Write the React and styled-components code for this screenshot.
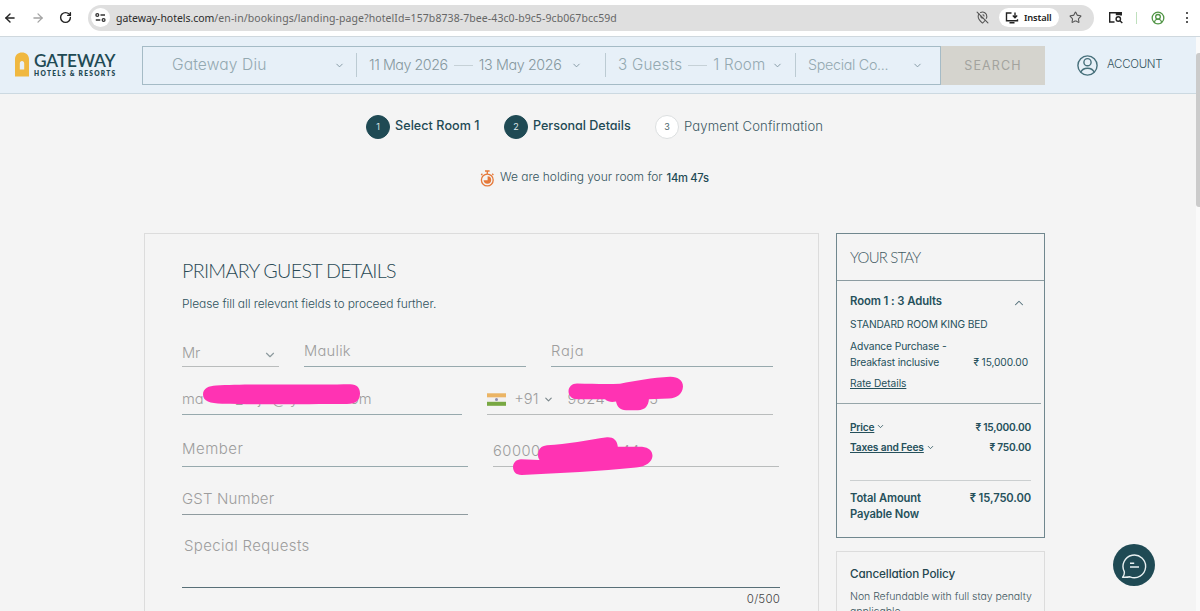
import React from 'react';
import styled, { createGlobalStyle, css } from 'styled-components';
import {
  ArrowLeft, ArrowRight, ChevronDown, ChevronUp, CircleUserRound, MapPinOff, RotateCw, Star,
} from 'lucide-react';

// === STYLES === //

const GlobalStyle = createGlobalStyle`
  * {
    box-sizing: border-box;
  }

  body {
    margin: 0;
    overflow: hidden;
    background: #f4f4f4;
    color: #1f4a54;
    font-family: Inter, "Noto Sans", sans-serif;
  }
`;

// size, weight and tracking differ for nearly every label
const type = css`
  font-size: ${(props) => props.$size || 12}px;
  font-weight: ${(props) => props.$weight || 300};
  letter-spacing: ${(props) => props.$track || 0}px;
  white-space: nowrap;
`;

const Window = styled.div`
  display: flex;
  flex-direction: column;
  height: 611px;
  overflow: hidden;
`;

// browser bar

const BrowserBar = styled.div`
  flex: none;
  display: flex;
  align-items: center;
  height: 37px;
  padding: 0 8px 1px 3px;
  background: #fff;
  border-bottom: 1px solid #cfd8de;
`;

const NavButtons = styled.div`
  display: flex;
  align-items: center;
  gap: 14px;
  width: 85px;
`;

const AddressBar = styled.div`
  display: flex;
  align-items: center;
  width: 1006px;
  height: 26px;
  padding: 0 12px 0 3px;
  border-radius: 13px;
  background: #dfdfdf;
`;

const SiteInfo = styled.div`
  display: flex;
  align-items: center;
  justify-content: center;
  width: 19px;
  height: 19px;
  margin-right: 6px;
  border-radius: 50%;
  background: #fff;
`;

const Url = styled.div`
  flex: 1;
  font-family: "Noto Sans", sans-serif;
  font-size: 10.5px;
  letter-spacing: 0.08px;
  white-space: nowrap;
  color: #666;
`;

const UrlHost = styled.span`
  color: #2c2c2c;
  letter-spacing: -0.04px;
`;

const InstallButton = styled.div`
  display: flex;
  align-items: center;
  gap: 5px;
  width: 60px;
  height: 19px;
  margin: 0 10px 0 10px;
  padding-left: 6px;
  border-radius: 10px;
  background: #fff;
  font-family: "Noto Sans", sans-serif;
  font-size: 9.3px;
  font-weight: 600;
  letter-spacing: -0.15px;
  color: #222;
`;

const BrowserActions = styled.div`
  flex: 1;
  display: flex;
  align-items: center;
  margin-left: 14px;
`;

const ActionDivider = styled.div`
  width: 1px;
  height: 12px;
  margin: 0 14px 0 13px;
  background: #bfe0bd;
`;

const MenuDots = styled.div`
  display: grid;
  gap: 2.5px;
  margin-left: 21px;

  span {
    width: 2px;
    height: 2px;
    border-radius: 50%;
    background: #222;
  }
`;

// viewport under the browser bar

const Viewport = styled.div`
  flex: 1;
  display: flex;
  min-height: 0;
`;

const Page = styled.div`
  width: 1196px;
  overflow: hidden;
  font-feature-settings: "cv11";
`;

const Scrollbar = styled.div`
  width: 4px;
  padding-top: 16px;
  background: #fafafa;
`;

const ScrollThumb = styled.div`
  height: 154px;
  border-radius: 3px 0 0 3px;
  background: #cbcbcb;
`;

// site header

const Header = styled.header`
  display: flex;
  height: 57px;
  padding: 9px 0 0 15px;
  background: #e7f0f8;
  border-bottom: 1px solid #ccd9e1;
`;

const Brand = styled.div`
  display: flex;
  gap: 5px;
  width: 127px;
  padding-top: 6px;
`;

const BrandText = styled.div`
  color: #1f4a54;
`;

const BrandName = styled.div`
  height: 16px;
  font-family: Lato, sans-serif;
  font-size: 17.3px;
  line-height: 17px;
  font-weight: 600;
  letter-spacing: -0.1px;
`;

const BrandTag = styled.div`
  margin-top: 1px;
  font-family: Lato, sans-serif;
  font-size: 6.6px;
  line-height: 8px;
  font-weight: 800;
  letter-spacing: 1.27px;
  white-space: nowrap;
`;

const SearchBox = styled.div`
  display: flex;
  align-items: center;
  width: 799px;
  height: 39px;
  padding-bottom: 1px;
  border: 1px solid #a5bbc6;
`;

const SearchField = styled.div`
  display: flex;
  align-items: center;
  width: ${(props) => props.$width}px;
  height: 24px;
  padding: 0 ${(props) => props.$right}px 0 ${(props) => props.$left}px;
  border-left: ${(props) => (props.$first ? 'none' : '1px solid #bccbd3')};
  color: ${(props) => props.$color || '#94a9b1'};

  svg {
    margin-left: auto;
  }
`;

const SearchText = styled.span`
  ${type}
  padding-bottom: 2px;
`;

const Dash = styled.span`
  width: 19px;
  height: 1px;
  margin: 0 6px;
  background: #c6d1d7;
`;

const SearchButton = styled.button`
  width: 104px;
  height: 39px;
  padding: 0;
  border: none;
  background: #d5d4ce;
  color: #a3a39e;
  font: 400 12.5px Inter, sans-serif;
  letter-spacing: 1.15px;
`;

const Account = styled.div`
  display: flex;
  align-items: center;
  gap: 9px;
  height: 39px;
  margin-left: 32px;
  color: #47707b;
`;

const AccountText = styled.span`
  ${type}
  padding-bottom: 3px;
  color: #33535e;
`;

// booking steps

const Steps = styled.div`
  display: flex;
  align-items: center;
  height: 25px;
  margin: 20px 0 0 366px;
`;

const Step = styled.div`
  display: flex;
  align-items: center;
  gap: 5px;
  width: ${(props) => props.$width}px;
`;

const StepNumber = styled.div`
  display: flex;
  align-items: center;
  justify-content: center;
  width: 24px;
  height: 24px;
  border: 1px solid ${(props) => (props.$done ? '#1f4a54' : '#dcdfe0')};
  border-radius: 50%;
  background: ${(props) => (props.$done ? '#1f4a54' : '#fff')};
  color: ${(props) => (props.$done ? '#dfe8ea' : '#4d666e')};
  font-size: 9px;
`;

const StepLabel = styled.div`
  ${type}
  padding-bottom: 2px;
  color: ${(props) => (props.$weight === 500 ? '#1f4a54' : '#3d5a64')};
`;

const HoldNotice = styled.div`
  display: flex;
  align-items: center;
  height: 18px;
  margin: 30px 0 0 480px;
`;

const HoldText = styled.span`
  ${type}
  padding-bottom: 3px;
  margin-left: 5px;
  color: ${(props) => (props.$weight === 500 ? '#1f4a54' : '#35545e')};
`;

const TimeLeft = styled(HoldText)`
  margin-left: 4px;
  padding-bottom: 1px;
`;

const Columns = styled.main`
  display: flex;
  align-items: flex-start;
  gap: 17px;
  margin: 46px 0 0 144px;
`;

// guest form

const GuestCard = styled.section`
  position: relative;
  width: 675px;
  height: 420px;
  padding: 24px 0 0 37px;
  border: 1px solid #dcdcdc;
`;

const CardTitle = styled.h2`
  ${type}
  height: 26px;
  margin: 0;
  font-family: Lato, sans-serif;
  line-height: 26px;
  color: #2a4a55;
`;

const CardHint = styled.p`
  ${type}
  height: 20px;
  margin: 10px 0 0;
  line-height: 20px;
  color: #2f525d;
`;

const FieldRow = styled.div`
  display: flex;
  align-items: flex-end;
  gap: ${(props) => props.$gap || 25}px;
  height: ${(props) => props.$height}px;
`;

const Field = styled.div`
  display: flex;
  align-items: center;
  width: ${(props) => props.$width}px;
  height: 30px;
  padding-top: ${(props) => props.$drop || 0}px;
  padding-bottom: ${(props) => props.$lift || 0}px;
  border-bottom: 1px solid ${(props) => props.$line || '#97a9ad'};
  color: #9d9d9d;

  svg {
    flex: none;
  }
`;

const FieldText = styled.span`
  ${type}
  font-size: ${(props) => props.$size || 14.7}px;
  width: ${(props) => (props.$width ? `${props.$width}px` : 'auto')};
`;

const SelectArrow = styled(ChevronDown)`
  margin: 3px 2px 0 auto;
`;

const Requests = styled.div`
  width: 598px;
  height: 73px;
  padding: 20px 0 0 2px;
  border-bottom: 1px solid #586f77;
  color: #9d9d9d;
`;

const Counter = styled.div`
  ${type}
  width: 598px;
  margin-top: 4px;
  text-align: right;
  color: #444;
`;

const Scribbles = styled.svg`
  position: absolute;
  left: 37px;
  top: 136px;
`;

// stay summary

const Sidebar = styled.aside`
  width: 209px;
  font-feature-settings: normal;
`;

const StayCard = styled.section`
  height: 305px;
  border: 1px solid #70878e;
`;

const StayTitle = styled.h3`
  ${type}
  height: 47px;
  margin: 0;
  padding-left: 13px;
  border-bottom: 1px solid #8c9ca1;
  font-family: Lato, sans-serif;
  line-height: 46px;
  color: #3f5963;
`;

const RoomBlock = styled.div`
  width: 204px;
  height: 123px;
  padding: 11px 13px 0;
  border-bottom: 1px solid #96a5a9;
`;

const CollapseArrow = styled(ChevronUp)`
  margin: 4px 2px 0 0;
`;

const Split = styled.div`
  display: flex;
  align-items: ${(props) => props.$align || 'center'};
  justify-content: space-between;
  height: ${(props) => props.$height}px;
`;

const StayText = styled.div`
  ${type}
  line-height: 16px;
  color: #25505b;
`;

const StayLink = styled.span`
  ${type}
  text-decoration: underline;
  text-underline-offset: 1px;
  line-height: 16px;
  color: #25505b;
`;

const LinkGroup = styled.div`
  display: flex;
  align-items: center;
  gap: 2px;
`;

const PriceBlock = styled.div`
  height: 77px;
  margin: 0 13px;
  padding-top: 12px;
  border-bottom: 1px solid #cbcfd0;
`;

const TotalBlock = styled.div`
  display: flex;
  justify-content: space-between;
  margin: 0 13px;
  padding-top: 9px;
`;

const PolicyCard = styled.section`
  height: 100px;
  margin-top: 13px;
  padding: 13px 0 0 13px;
  border: 1px solid #dcdcdc;
  font-feature-settings: "cv11";
`;

const PolicyTitle = styled.div`
  ${type}
  line-height: 18px;
  color: #25464f;
`;

const PolicyText = styled.div`
  ${type}
  margin-top: 6px;
  line-height: 15px;
  color: #3e5760;
`;

const ChatButton = styled.button`
  position: fixed;
  left: 1113px;
  top: 544px;
  display: flex;
  align-items: center;
  justify-content: center;
  width: 42px;
  height: 42px;
  padding: 0;
  border: none;
  border-radius: 50%;
  background: #1f4a54;
`;

// ===  ICONS === //

const TuneIcon = () => (
  <svg width="11" height="11" viewBox="0 0 11 11" fill="none" stroke="#333" strokeWidth="1.3">
    <circle cx="2.3" cy="3" r="1.4" />
    <path d="M5.5 3H10M0.8 8H5.3" />
    <circle cx="8.6" cy="8" r="1.4" />
  </svg>
);

const InstallIcon = () => (
  <svg width="14" height="12" viewBox="0 0 14 12" fill="none" stroke="#222" strokeWidth="1.4">
    <path d="M6.5 1H1.5V8.8H12.5V7.2M4.5 10.8H9.5M10 0.5V5.5M7.8 3.6L10 5.8L12.2 3.6" />
  </svg>
);

const SearchPanelIcon = () => (
  <svg width="15" height="13" viewBox="0 0 15 13" fill="none" stroke="#222" strokeWidth="1.4">
    <path d="M6.5 11H1.7V1.7H13V4.5" />
    <path d="M8.5 1.7H13.2V3.5H8.5Z" fill="#222" />
    <circle cx="10.3" cy="8" r="2.2" />
    <path d="M12 9.7L14.3 12" />
  </svg>
);

const DoorLogo = () => (
  <svg width="14" height="25" viewBox="0 0 14 25">
    <path
      d="M0 24.5V7C0 3.2 3 0.5 7 0.5S14 3.2 14 7V24.5ZM4.8 17.5H9.2V11.5C9.2 10 8.3 9 7 9S4.8 10 4.8 11.5Z"
      fill="#f0b840"
      fillRule="evenodd"
    />
  </svg>
);

const AccountIcon = () => (
  <svg width="21" height="21" viewBox="0 0 21 21" fill="none" stroke="currentColor" strokeWidth="1.4">
    <circle cx="10.5" cy="10.5" r="9.6" />
    <circle cx="10.5" cy="7.2" r="3.6" />
    <path d="M3.8 17.2C5 14.4 7.5 13.2 10.5 13.2S16 14.4 17.2 17.2" />
  </svg>
);

const TimerIcon = () => (
  <svg width="15" height="17" viewBox="0 0 15 17" fill="none" stroke="#e5793a" strokeWidth="1.3">
    <circle cx="7.3" cy="10" r="5.9" />
    <path d="M5 1H9.6M7.3 1V4M12.2 3.8L13.4 5M2.4 3.8L1.2 5" />
    <path d="M7.6 6.2A3.8 3.8 0 1 1 3.6 10.3H7.6Z" fill="#e5793a" stroke="none" />
  </svg>
);

const IndiaFlag = () => (
  <svg width="19" height="13" viewBox="0 0 19 13">
    <rect width="19" height="13" fill="#f2f0ef" />
    <rect width="19" height="4" y="0.3" fill="#ebb464" />
    <rect width="19" height="4" y="8.8" fill="#78a843" />
    <circle cx="9.5" cy="6.5" r="1.5" fill="#8f8fae" />
  </svg>
);

const ChatIcon = () => (
  <svg width="26" height="27" viewBox="0 0 26 27" fill="none" stroke="#e9f1f2" strokeWidth="1.4">
    <path d="M3.3 19.6A11.3 11.3 0 1 1 9 24.8C6.8 25.3 4.6 25.4 1.6 25.2C3 23.6 3.6 21.8 3.3 19.6Z" strokeLinejoin="round" />
    <path d="M9 11.2H13.2M9 15H18" strokeWidth="1.6" />
  </svg>
);

// ===  COMPONENT DEFINITION ===  //

const Browser = () => (
  <BrowserBar>
    <NavButtons>
      <ArrowLeft size={14} color="#222" strokeWidth={2.4} />
      <ArrowRight size={14} color="#a3a3a3" strokeWidth={2.2} />
      <RotateCw size={13} color="#222" strokeWidth={2.6} />
    </NavButtons>
    <AddressBar>
      <SiteInfo><TuneIcon /></SiteInfo>
      <Url>
        <UrlHost>gateway-hotels.com</UrlHost>
        /en-in/bookings/landing-page?hotelId=157b8738-7bee-43c0-b9c5-9cb067bcc59d
      </Url>
      <MapPinOff size={13} color="#555" strokeWidth={2} />
      <InstallButton>
        <InstallIcon />
        Install
      </InstallButton>
      <Star size={13} color="#555" strokeWidth={2} />
    </AddressBar>
    <BrowserActions>
      <SearchPanelIcon />
      <ActionDivider />
      <CircleUserRound size={14} color="#4f9444" strokeWidth={2.2} />
      <MenuDots>
        <span />
        <span />
        <span />
      </MenuDots>
    </BrowserActions>
  </BrowserBar>
);

const SiteHeader = () => (
  <Header>
    <Brand>
      <DoorLogo />
      <BrandText>
        <BrandName>GATEWAY</BrandName>
        <BrandTag>HOTELS &amp; RESORTS</BrandTag>
      </BrandText>
    </Brand>
    <SearchBox>
      <SearchField $first $width={213} $left={29} $right={11}>
        <SearchText $size={15.6} $track={0.12}>Gateway Diu</SearchText>
        <ChevronDown size={11} color="#8095a0" />
      </SearchField>
      <SearchField $width={249} $left={12} $right={23} $color="#86989f">
        <SearchText $size={14.3} $track={-0.46}>11 May 2026</SearchText>
        <Dash />
        <SearchText $size={14.3} $track={-0.36}>13 May 2026</SearchText>
        <ChevronDown size={11} color="#8095a0" />
      </SearchField>
      <SearchField $width={190} $left={12} $right={12}>
        <SearchText $size={15.2} $track={0.22}>3 Guests</SearchText>
        <Dash />
        <SearchText $size={15.2} $track={0.2}>1 Room</SearchText>
        <ChevronDown size={11} color="#8095a0" />
      </SearchField>
      <SearchField $width={145} $left={12} $right={17}>
        <SearchText $size={14.3} $track={-0.3}>Special Co...</SearchText>
        <ChevronDown size={11} color="#8095a0" />
      </SearchField>
    </SearchBox>
    <SearchButton>SEARCH</SearchButton>
    <Account>
      <AccountIcon />
      <AccountText $size={11.5} $track={-0.3}>ACCOUNT</AccountText>
    </Account>
  </Header>
);

const BookingSteps = () => (
  <Steps>
    <Step $width={138}>
      <StepNumber $done>1</StepNumber>
      <StepLabel $size={12.6} $weight={500} $track={0.05}>Select Room 1</StepLabel>
    </Step>
    <Step $width={151}>
      <StepNumber $done>2</StepNumber>
      <StepLabel $size={12.6} $weight={500} $track={-0.03}>Personal Details</StepLabel>
    </Step>
    <Step $width={180}>
      <StepNumber>3</StepNumber>
      <StepLabel $size={13.1} $track={0.12}>Payment Confirmation</StepLabel>
    </Step>
  </Steps>
);

// marker strokes over the private values
const Redactions = () => (
  <Scribbles width="600" height="110" viewBox="182 370 600 110" fill="#ff33b3">
    <path d="M203 394.5C203 388 209 386 216 385.5C250 383.5 315 385 350 384.3C357 384.2 360 388 360 393.5C360 400 356 404 347 404C310 404 255 404.8 222 403.8C210 403.4 203 401 203 394.5Z" />
    <path d="M568.5 391.5C568.5 387 572 383.5 577 383.5C592 383.7 606 384.5 620 383.7C636 381 652 377.5 670 376.8C678 376.6 683 380.5 683 386.5C682.5 394 677 398.3 669 398.5L648.8 399.3C648.5 406 645 410 638 410.3H626C620 410 617 406.5 616 401.5C612 402.5 608 402 605 399.3H577C572 399 568.5 396 568.5 391.5Z" />
    <path d="M538 455C538 449 541 446 547 445.2C567 444.3 588 440 607 437.2C613 436.8 617.5 440 617.8 446.8H642C649 447.5 652.5 451 652.5 456C652 462 646 466.5 636 467.5C600 471 560 473.2 522 475C516 475.2 513 471.5 513 467C513 462.5 516.5 459.3 521 459.2L539.5 460C538.5 458.5 538 457 538 455Z" />
  </Scribbles>
);

const GuestForm = () => (
  <GuestCard>
    <CardTitle $size={19.7} $track={-0.72}>PRIMARY GUEST DETAILS</CardTitle>
    <CardHint $size={12} $track={-0.09}>Please fill all relevant fields to proceed further.</CardHint>
    <FieldRow $height={53}>
      <Field $width={97} $line="#b9bcbc" $drop={3}>
        <FieldText $track={-0.3}>Mr</FieldText>
        <SelectArrow size={14} color="#8d9a9e" />
      </Field>
      <Field $width={222} $lift={1}>
        <FieldText $track={0.25}>Maulik</FieldText>
      </Field>
      <Field $width={222} $lift={1}>
        <FieldText $track={0.8}>Raja</FieldText>
      </Field>
    </FieldRow>
    <FieldRow $height={48}>
      <Field $width={280} $lift={2}>
        <FieldText $width={54}>ma</FieldText>
        <FieldText $width={22}>_</FieldText>
        <FieldText $width={14}>j</FieldText>
        <FieldText $width={18}>@</FieldText>
        <FieldText $width={60}>y</FieldText>
        <FieldText>om</FieldText>
      </Field>
      <Field $width={286} $line="#b9bcbc" $lift={1}>
        <IndiaFlag />
        <FieldText $width={37}>&nbsp;&nbsp;+91</FieldText>
        <ChevronDown size={11} color="#7b878b" strokeWidth={2.5} />
        <FieldText $width={82} $track={0.4}>&nbsp;&nbsp;&nbsp;9824</FieldText>
        <FieldText $width={30}>&nbsp;05</FieldText>
      </Field>
    </FieldRow>
    <FieldRow $height={52}>
      <Field $width={286} $lift={6}>
        <FieldText $size={15} $track={0.5}>Member</FieldText>
      </Field>
      <Field $width={286} $line="#b9bcbc" $lift={2}>
        <FieldText $width={128} $track={0.5}>60000</FieldText>
        <FieldText>44</FieldText>
      </Field>
    </FieldRow>
    <FieldRow $height={48}>
      <Field $width={286} $line="#8f9b9f" $lift={2}>
        <FieldText $size={15} $track={0.14}>GST Number</FieldText>
      </Field>
    </FieldRow>
    <Requests>
      <FieldText $size={15} $track={0.34}>Special Requests</FieldText>
    </Requests>
    <Counter $size={11.5} $track={0.2}>0/500</Counter>
    <Redactions />
  </GuestCard>
);

const StaySummary = () => (
  <StayCard>
    <StayTitle $size={15} $track={-0.82}>YOUR STAY</StayTitle>
    <RoomBlock>
      <Split $height={18}>
        <StayText $size={11.3} $weight={600} $track={-0.08}>Room 1 : 3 Adults</StayText>
        <CollapseArrow size={14} color="#54707a" strokeWidth={1.8} />
      </Split>
      <Split $height={28}>
        <StayText $size={10.2} $weight={400} $track={-0.1}>STANDARD ROOM KING BED</StayText>
      </Split>
      <Split $height={32} $align="flex-end">
        <StayText $size={10.3} $weight={400} $track={-0.14}>
          Advance Purchase -
          <br />
          Breakfast inclusive
        </StayText>
        <StayText $size={10.2} $weight={400} $track={-0.1}>₹ 15,000.00</StayText>
      </Split>
      <Split $height={25}>
        <StayLink $size={10.2} $weight={400} $track={-0.05}>Rate Details</StayLink>
      </Split>
    </RoomBlock>
    <PriceBlock>
      <Split $height={21}>
        <LinkGroup>
          <StayLink $size={10.2} $weight={600} $track={-0.2}>Price</StayLink>
          <ChevronDown size={9} />
        </LinkGroup>
        <StayText $size={10.2} $weight={600} $track={-0.22}>₹ 15,000.00</StayText>
      </Split>
      <Split $height={20}>
        <LinkGroup>
          <StayLink $size={10.2} $weight={600} $track={-0.15}>Taxes and Fees</StayLink>
          <ChevronDown size={9} />
        </LinkGroup>
        <StayText $size={10.2} $weight={600} $track={-0.22}>₹ 750.00</StayText>
      </Split>
    </PriceBlock>
    <TotalBlock>
      <StayText $size={11.2} $weight={600} $track={-0.1}>
        Total Amount
        <br />
        Payable Now
      </StayText>
      <StayText $size={11.2} $weight={600} $track={-0.1}>₹ 15,750.00</StayText>
    </TotalBlock>
  </StayCard>
);

const CancellationPolicy = () => (
  <PolicyCard>
    <PolicyTitle $size={11.7} $weight={500} $track={-0.12}>Cancellation Policy</PolicyTitle>
    <PolicyText $size={10.5} $track={-0.05}>
      Non Refundable with full stay penalty
      <br />
      applicable.
    </PolicyText>
  </PolicyCard>
);

export default function App() {
  return (
    <Window>
      <GlobalStyle />
      <Browser />
      <Viewport>
        <Page>
          <SiteHeader />
          <BookingSteps />
          <HoldNotice>
            <TimerIcon />
            <HoldText $size={12} $track={-0.03}>We are holding your room for</HoldText>
            <TimeLeft $size={11.2} $weight={500} $track={-0.3}>14m 47s</TimeLeft>
          </HoldNotice>
          <Columns>
            <GuestForm />
            <Sidebar>
              <StaySummary />
              <CancellationPolicy />
            </Sidebar>
          </Columns>
        </Page>
        <Scrollbar>
          <ScrollThumb />
        </Scrollbar>
      </Viewport>
      <ChatButton>
        <ChatIcon />
      </ChatButton>
    </Window>
  );
}
